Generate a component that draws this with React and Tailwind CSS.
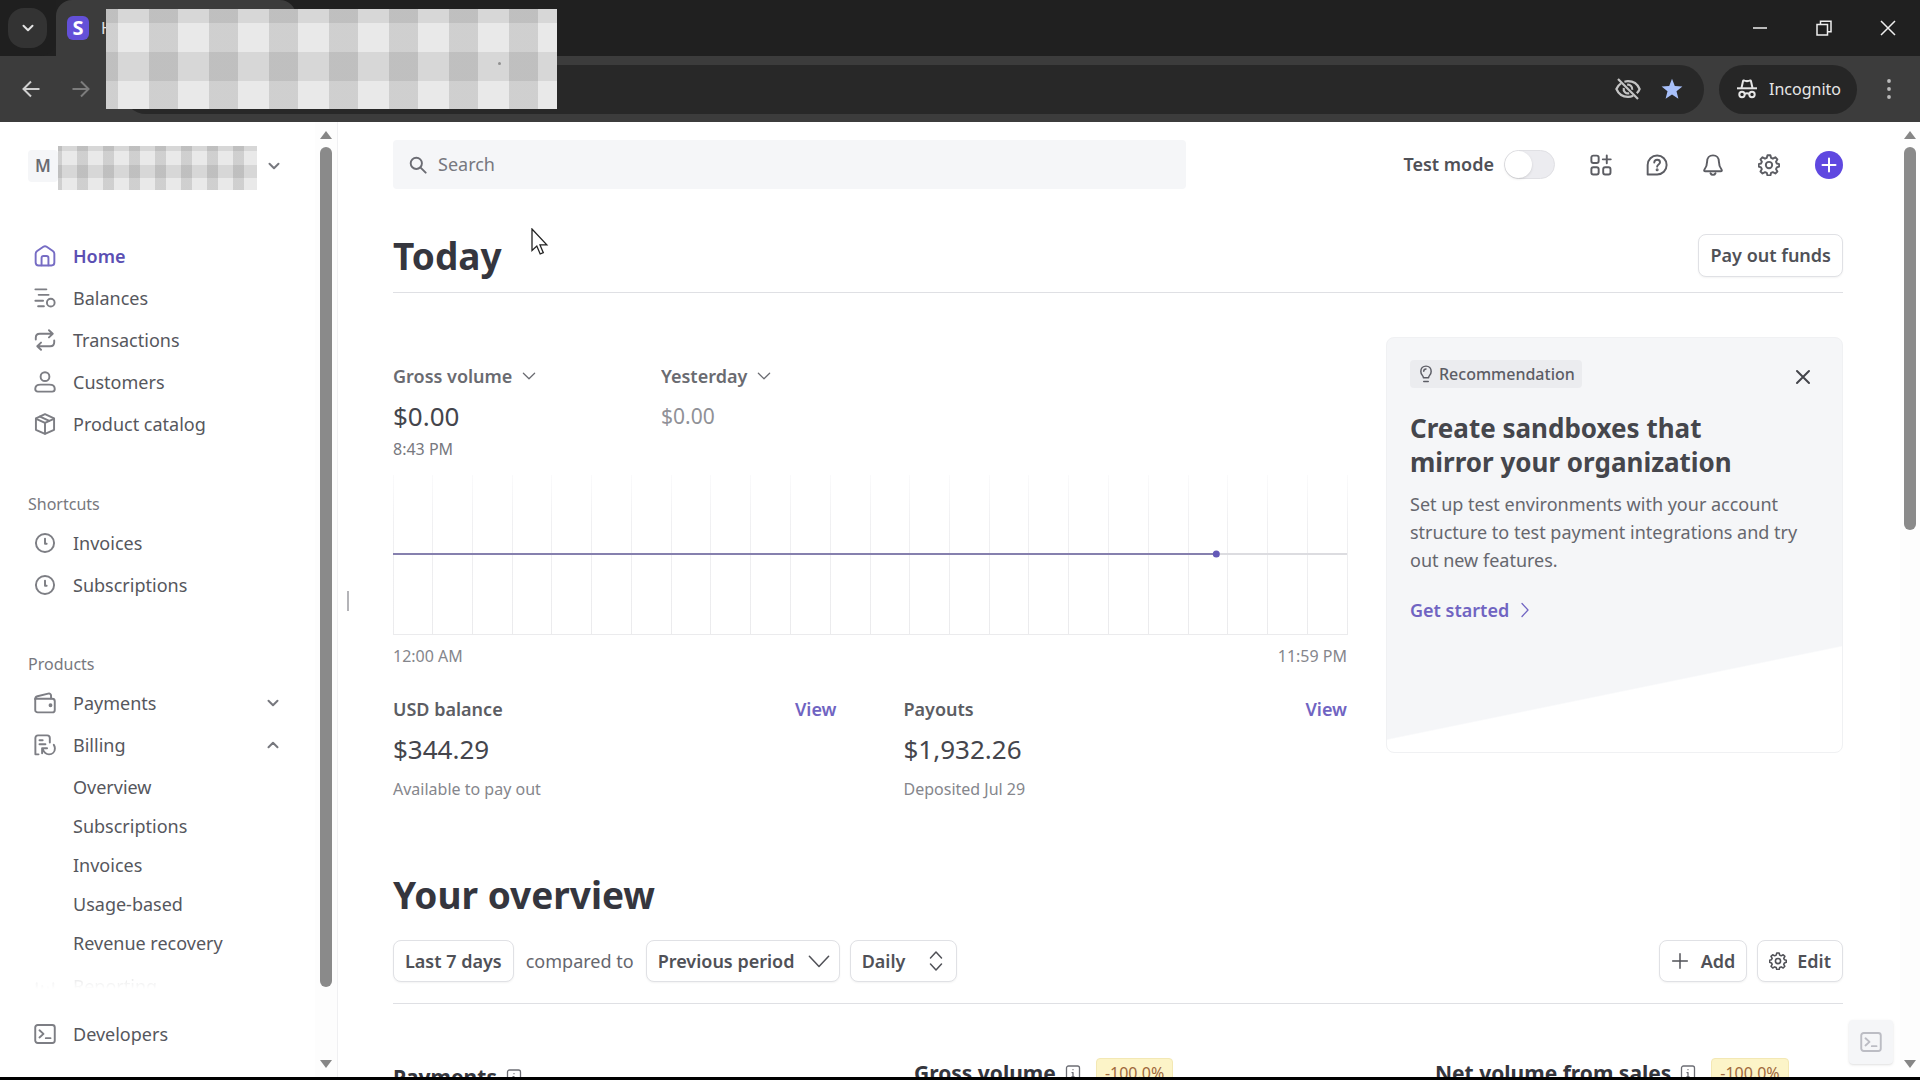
import React from "react";

function Icon({ children, className = "size-[22px]", width = 1.4 }) {
  return (
    <svg
      viewBox="0 0 16 16"
      className={`shrink-0 ${className}`}
      fill="none"
      stroke="currentColor"
      strokeWidth={width}
      strokeLinecap="round"
      strokeLinejoin="round"
      aria-hidden="true"
    >
      {children}
    </svg>
  );
}

const glyphs = {
  home: (
    <>
      <path d="M1.2 6.4c0-.9.4-1.5 1.1-2L6.8 1.3c.8-.5 1.6-.5 2.4 0l4.5 3.1c.7.5 1.1 1.1 1.1 2v6.4c0 1.3-.8 2.1-2.1 2.1H3.3c-1.3 0-2.1-.8-2.1-2.1Z" />
      <path d="M5.5 14.7V9.4c0-.9.5-1.4 1.4-1.4h2.2c.9 0 1.4.5 1.4 1.4v5.3" />
    </>
  ),
  balances: (
    <>
      <path d="M1 1.7h8M3.4 5.7h7.2M1 10h5.6M3 14h4.2" />
      <circle cx="12.2" cy="11.4" r="2.8" />
    </>
  ),
  transactions: (
    <>
      <path d="M1.3 7.6V6.4c0-1.9 1-2.9 2.9-2.9h9.2M10.9.9l2.7 2.6-2.7 2.6" />
      <path d="M14.7 8.4v1.2c0 1.9-1 2.9-2.9 2.9H2.6M5.1 9.9l-2.7 2.6 2.7 2.6" />
    </>
  ),
  customers: (
    <>
      <circle cx="8" cy="4.1" r="3.2" />
      <path d="M.9 13.1c0-2.1 1.7-3.2 3.9-3.2h6.4c2.2 0 3.9 1.1 3.9 3.2 0 1.2-.7 1.9-1.9 1.9H2.8c-1.2 0-1.9-.7-1.9-1.9Z" />
    </>
  ),
  catalog: (
    <>
      <path d="m8 .9 6.6 3v8.3L8 15.2l-6.6-3V3.9Z" />
      <path d="M1.6 4.2 8 7.2l6.4-3M8 7.2v7.8M4.4 2.6l6.7 3.2" />
    </>
  ),
  clock: (
    <>
      <circle cx="8" cy="8" r="6.6" />
      <path d="M8 4.8v3.7h1.2" />
    </>
  ),
  payments: (
    <>
      <path d="M.9 4.9h12.4c1.1 0 1.8.7 1.8 1.8v6.3c0 1.100-.7 1.800-1.800 1.800H2.700c-1.100 0-1.800-.7-1.800-1.800Z" />
      <path d="M.9 5.2c0-1.100.5-1.800 1.600-2.100l7.800-1.900c1.300-.3 2.100.3 2.100 1.500v2" />
      <circle cx="12" cy="9.6" r=".7" fill="currentColor" />
    </>
  ),
  billing: (
    <>
      <path d="M3.300 14.800H1V2.900C1 1.700 1.700 1 2.900 1h6.700c1.200 0 1.900.7 1.900 1.900v3.300M4 4.500h2.300M4 7.500h4.300" />
      <path d="M5.900 10.300V14M5.900 10.300h3.600M6.300 10.900c1 2.500 2.400 3.900 4.600 3.900 2.500 0 4.300-1.800 4.300-4.300 0-1-.3-1.900-.8-2.600" />
    </>
  ),
  reporting: <path d="M2 15V6M6 15V8M10 15V9M14 15V6" />,
  terminal: (
    <>
      <rect x=".9" y="1.5" width="14.2" height="13" rx="1.8" />
      <path d="m4 5.300 2.900 2.600L4 10.500M8.600 11h3.400" />
    </>
  ),
  down: <path d="m3.500 5.800 4.500 4.400 4.500-4.400" />,
  wideDown: <path d="m1 4.500 7 7.500 7-7.500" />,
  up: <path d="m3.500 10.200 4.500-4.400 4.500 4.400" />,
  right: <path d="m5 1.500 6 6.500-6 6.500" />,
  search: (
    <>
      <circle cx="6.5" cy="6.5" r="5" />
      <path d="m10.300 10.300 4.500 4.500" />
    </>
  ),
  apps: (
    <>
      <rect x="1" y="1.2" width="5.3" height="5.3" rx="1.4" />
      <rect x="1" y="9.6" width="5.3" height="5.3" rx="1.4" />
      <rect x="9.6" y="9.6" width="5.3" height="5.3" rx="1.4" />
      <path d="M12.200 1v5.800M9.300 3.900h5.800" />
    </>
  ),
  help: (
    <>
      <path d="M1.200 14.900V8A6.900 6.900 0 1 1 8.100 14.900Z" />
      <path d="M6 6.200c.1-1.300.9-2 2.100-2s2.100.7 2.100 1.800c0 1.600-2.100 1.600-2.100 3.200" />
      <circle cx="8.1" cy="11.5" r=".4" fill="currentColor" />
    </>
  ),
  bell: (
    <>
      <path d="M8 1C5.300 1 3.700 3 3.700 5.600c0 3-.9 4.300-1.900 5.700-.5.700-.2 1.300.6 1.300h11.200c.8 0 1.100-.6.6-1.300-1-1.400-1.900-2.700-1.900-5.700C12.300 3 10.700 1 8 1Z" />
      <path d="M6.200 14c.3.700.9 1.200 1.800 1.200s1.500-.5 1.800-1.200" />
    </>
  ),
  gear: (
    <>
      <path d="m6.900.9-.5 1.900-1.300.6-1.800-1-1.500 1.500 1 1.800-.6 1.200-1.700.5v1.700l1.700.6.6 1.300-1 1.700 1.500 1.500 1.800-1 1.300.6.500 1.800h2.100l.5-1.800 1.300-.6 1.800 1 1.500-1.500-1-1.700.6-1.300 1.700-.6V7.400l-1.700-.5-.6-1.200 1-1.800-1.500-1.500-1.800 1-1.300-.6L9 .9Z" />
      <circle cx="8" cy="8" r="2.3" />
    </>
  ),
  plus: <path d="M8 1.500v13M1.500 8h13" />,
  close: <path d="m2 2 12 12M14 2 2 14" />,
  bulb: (
    <>
      <path d="M5.700 11.300c0-1.700-2.300-2.700-2.300-5.600C3.400 3 5.300 1 8 1s4.600 2 4.600 4.700c0 2.900-2.300 3.900-2.300 5.600ZM6 14.700h4" />
      <path d="M8 3.600c-1.200 0-2 .8-2 2" />
    </>
  ),
  info: (
    <>
      <rect x="1.5" y="1" width="13" height="14" rx="2" />
      <path d="M8 4.600v.1M7 7.600h1v4M7 11.600h2" />
    </>
  ),
  sort: <path d="m4 5.800 4-4.300 4 4.300M4 10.200l4 4.300 4-4.300" />,
};

function TitleBar() {
  return (
    <header className="shrink-0 bg-[#3c3c3c]">
      <div className="flex h-14 items-start bg-[#202020]">
        <div className="flex h-14 w-[56px] items-start rounded-br-2xl bg-[#1f1f1f] pt-2 pl-2">
          <button aria-label="Search tabs" className="flex h-10 w-[39px] items-center justify-center rounded-2xl bg-[#333333] text-[#e3e3e3]">
            <Icon className="size-4" width={2}>{glyphs.down}</Icon>
          </button>
        </div>
        <div className="flex h-14 w-[240px] items-center gap-3 rounded-t-2xl bg-[#3c3c3c] pl-[11px]">
          <span className="flex h-6 w-[22px] items-center justify-center rounded-md bg-[#6350d8] text-[20px] leading-none font-bold text-white">S</span>
          <span className="text-[16px] text-[#e3e3e3]">Home</span>
        </div>
        <div className="ml-auto flex h-14 items-center text-[#eeeeee]">
          <button aria-label="Minimize" className="flex w-16 justify-center">
            <svg viewBox="0 0 16 16" className="size-4" stroke="currentColor" strokeWidth="1.5"><path d="M1 8h14" /></svg>
          </button>
          <button aria-label="Restore" className="flex w-16 justify-center">
            <svg viewBox="0 0 16 16" className="size-4" fill="none" stroke="currentColor" strokeWidth="1.5"><path d="M1 4.500h10.500V15H1ZM4.500 4.500V1.200H15v10.500h-3.500" /></svg>
          </button>
          <button aria-label="Close window" className="flex w-16 justify-center">
            <svg viewBox="0 0 16 16" className="size-4" fill="none" stroke="currentColor" strokeWidth="1.5"><path d="m1 1 14 14M15 1 1 15" /></svg>
          </button>
        </div>
      </div>
      <div className="flex h-[66px] items-center pr-[29px] pl-[22px]">
        <button aria-label="Back" className="mr-8 text-[#d0d0d0]">
          <svg viewBox="0 0 18 18" className="size-[18px]" fill="none" stroke="currentColor" strokeWidth="2"><path d="M17.500 9H2M9 1.500 1.500 9 9 16.500" /></svg>
        </button>
        <button aria-label="Forward" className="mr-8 text-[#7c7c7c]">
          <svg viewBox="0 0 18 18" className="size-[18px]" fill="none" stroke="currentColor" strokeWidth="2"><path d="M.5 9H16M9 1.500 16.500 9 9 16.500" /></svg>
        </button>
        <div className="flex h-[49px] flex-1 items-center justify-end gap-5 rounded-full bg-[#282828] pr-[21px]">
          <svg viewBox="0 0 26 22" className="h-[22px] w-[26px]" fill="none" stroke="#c4c4c4" strokeWidth="2.2">
            <path d="M6 5.400C4 6.700 2.400 8.700 1.400 11 3.400 15.700 7.800 18.800 13 18.800c1.900 0 3.600-.4 5.200-1.100M9.400 3.700c1.100-.3 2.300-.5 3.600-.5 5.200 0 9.600 3.100 11.600 7.800-.6 1.600-1.600 3-2.800 4.200" />
            <path d="M12.200 6.800a4.300 4.300 0 0 1 5 5M8.800 10a4.300 4.300 0 0 0 5.400 5.200M3 1l20 20" />
          </svg>
          <svg viewBox="0 0 22 22" className="size-[22px]" fill="#a8c0fa"><path d="m11 .8 2.800 7.100 7.600.5-5.900 4.900 1.900 7.500-6.400-4.200-6.400 4.200 1.900-7.500L.6 8.400l7.600-.5Z" /></svg>
        </div>
        <button className="mr-[30px] ml-[15px] flex h-[49px] items-center gap-3 rounded-full bg-[#262626] pr-4 pl-[18px] text-[16px] text-[#e6e6e6]">
          <svg viewBox="0 0 20 20" className="size-5" fill="none" stroke="currentColor" strokeWidth="2">
            <path d="M0 9.300h20" /><path d="M4.500 9 6 2.200c.2-.7.700-1 1.400-.7L10 2.300l2.600-.8c.7-.3 1.200 0 1.400.7L15.500 9" />
            <circle cx="5" cy="15.5" r="2.7" /><circle cx="15" cy="15.5" r="2.7" /><path d="M7.700 15c1.400-.9 3.200-.9 4.600 0" />
          </svg>
          Incognito
        </button>
        <button aria-label="Browser menu" className="text-[#bbbbbb]">
          <svg viewBox="0 0 4 22" className="h-[22px] w-1" fill="currentColor"><circle cx="2" cy="3" r="1.9" /><circle cx="2" cy="11" r="1.9" /><circle cx="2" cy="19" r="1.9" /></svg>
        </button>
      </div>
    </header>
  );
}

function ScrollRail({ thumb, className = "" }) {
  return (
    <div className={`flex shrink-0 flex-col items-center bg-[#fdfdfd] pt-[9px] pb-[9px] ${className}`} aria-hidden="true">
      <svg viewBox="0 0 12 8" className="h-2 w-3" fill="#868686"><path d="M6 0l6 8H0Z" /></svg>
      <div className="flex w-3 flex-1 flex-col pt-2">
        <div className={`w-3 rounded-full bg-[#8a8a8a] ${thumb}`} />
      </div>
      <svg viewBox="0 0 12 8" className="h-2 w-3" fill="#868686"><path d="M6 8l6-8H0Z" /></svg>
    </div>
  );
}

function NavItem({ icon, label, active, chevron }) {
  return (
    <a href="#" className={`flex h-[42px] items-center pl-[34px] ${active ? "font-semibold text-[#5b4fb3]" : "text-[#56575d]"}`}>
      <span className={`flex w-[39px] ${active ? "text-[#766cc4]" : "text-[#7d7e84]"}`}><Icon>{glyphs[icon]}</Icon></span>
      <span className="flex-1">{label}</span>
      {chevron && <span className="pr-[34px] text-[#77787e]"><Icon className="size-4" width={2}>{glyphs[chevron]}</Icon></span>}
    </a>
  );
}

function Sidebar() {
  return (
    <aside className="flex w-[338px] shrink-0 border-r border-[#f0f0f2]">
      <div className="flex min-w-0 flex-1 flex-col text-[18px]">
        <button className="mt-[19px] flex h-[49px] w-full shrink-0 items-center pl-7 text-left" aria-label="Switch account">
          <span className="flex h-8 w-[30px] items-center justify-center rounded bg-[#f5f6f8] text-[17px] font-semibold text-[#6a6b71]">M</span>
          <span className="h-11 w-[199px] self-end bg-[#e9e9e9] bg-[linear-gradient(180deg,#00000014_5px,transparent_5px_19px,#00000014_19px_32px,transparent_32px),repeating-linear-gradient(90deg,#0000001c_0px_4px,transparent_4px_19px,#0000001c_19px_26px)]" />
          <span className="ml-[9px] text-[#77787e]"><Icon className="size-4" width={2}>{glyphs.down}</Icon></span>
        </button>
        <nav className="mt-[45px] flex min-h-0 flex-1 flex-col overflow-hidden">
          <NavItem icon="home" label="Home" active />
          <NavItem icon="balances" label="Balances" />
          <NavItem icon="transactions" label="Transactions" />
          <NavItem icon="customers" label="Customers" />
          <NavItem icon="catalog" label="Product catalog" />
          <h2 className="mt-[49px] mb-2 pl-7 text-[16px] leading-5 text-[#77787e]">Shortcuts</h2>
          <NavItem icon="clock" label="Invoices" />
          <NavItem icon="clock" label="Subscriptions" />
          <h2 className="mt-12 mb-2 pl-7 text-[16px] leading-5 text-[#77787e]">Products</h2>
          <NavItem icon="payments" label="Payments" chevron="down" />
          <NavItem icon="billing" label="Billing" chevron="up" />
          <div className="flex flex-col pt-0.5 text-[#56575d]">
            {["Overview", "Subscriptions", "Invoices", "Usage-based", "Revenue recovery"].map((t) => (
              <a key={t} href="#" className="flex h-[39px] items-center pl-[73px]">{t}</a>
            ))}
          </div>
          <div className="mt-0.5 shrink-0 opacity-15 [mask-image:linear-gradient(180deg,#000000_12px,transparent_24px)]">
            <NavItem icon="reporting" label="Reporting" />
          </div>
        </nav>
        <div className="shrink-0 pb-[22px]"><NavItem icon="terminal" label="Developers" /></div>
      </div>
      <ScrollRail className="w-[22px]" thumb="h-[92%]" />
    </aside>
  );
}

function PlainSelect({ label, option }) {
  return (
    <label className="relative inline-flex items-center text-[#6a6b71]">
      <span className="sr-only">{label}</span>
      <select className="h-7 appearance-none pr-[26px] text-[18px] leading-7 font-semibold outline-none"><option>{option}</option></select>
      <Icon className="pointer-events-none absolute right-0 size-5" width={1}>{glyphs.down}</Icon>
    </label>
  );
}

const boxed = "rounded-lg border border-[#e0e1e5] bg-white shadow-xs font-semibold text-[#505157] text-[18px]";

function BoxedSelect({ label, option, icon, className }) {
  return (
    <label className="relative inline-flex items-center text-[#505157]">
      <span className="sr-only">{label}</span>
      <select className={`h-[42px] appearance-none pl-[11px] outline-none ${boxed} ${className}`}><option>{option}</option></select>
      <Icon className="pointer-events-none absolute right-[10px] size-[22px]" width={1.1}>{glyphs[icon]}</Icon>
    </label>
  );
}

function VolumeChart() {
  const hours = Array.from({ length: 25 }, (_, i) => i);
  return (
    <svg className="mt-4 block h-40 w-full overflow-visible" role="img" aria-label="Gross volume by hour">
      <defs>
        <linearGradient id="grid" x1="0" y1="0" x2="0" y2="160" gradientUnits="userSpaceOnUse">
          <stop offset="0" stopColor="#fafafb" /><stop offset=".3" stopColor="#f0f0f2" /><stop offset="1" stopColor="#ebebed" />
        </linearGradient>
      </defs>
      {hours.map((h) => (
        <line key={h} x1={`${(h / 24) * 100}%`} x2={`${(h / 24) * 100}%`} y1="0" y2="160" stroke="url(#grid)" strokeWidth="1" shapeRendering="crispEdges" />
      ))}
      <line x1="0" x2="100%" y1="159.5" y2="159.5" stroke="#ebebed" />
      <line x1="86.3%" x2="100%" y1="79" y2="79" stroke="#dcdce0" strokeWidth="2" />
      <line x1="0" x2="86.3%" y1="79" y2="79" stroke="#8680ae" strokeWidth="2" />
      <circle cx="86.3%" cy="79" r="3.5" fill="#6459b8" />
    </svg>
  );
}

function Balance({ title, amount, note }) {
  return (
    <section>
      <div className="flex items-center justify-between text-[18px] leading-6 font-semibold">
        <h3 className="text-[#5c5d63]">{title}</h3>
        <a href="#" className="text-[#7064c2]">View</a>
      </div>
      <p className="mt-3 text-[26px] leading-8 text-[#44454c]">{amount}</p>
      <p className="mt-[14px] text-[16px] leading-5 text-[#85868c]">{note}</p>
    </section>
  );
}

function Recommendation() {
  return (
    <aside className="flex h-[416px] w-[457px] shrink-0 flex-col items-start rounded-lg border border-[#f0f1f3] bg-[linear-gradient(168.4deg,#f5f6f8_79%,#ffffff_79.3%)] px-[23px] pt-[22px]">
      <div className="flex w-full items-end justify-between pr-2">
        <span className="flex h-7 items-center gap-1 rounded bg-[#ebecef] px-[7px] text-[16px] font-medium text-[#5c5d65]">
          <Icon className="size-[18px]" width={1.3}>{glyphs.bulb}</Icon>Recommendation
        </span>
        <button aria-label="Dismiss" className="pb-[3px] text-[#44454b]"><Icon className="size-4" width={2}>{glyphs.close}</Icon></button>
      </div>
      <h2 className="mt-[23px] max-w-[370px] text-[26px] leading-[34px] font-bold text-[#45464c]">Create sandboxes that mirror your organization</h2>
      <p className="mt-[11px] text-[18px] leading-7 text-[#66676e]">Set up test environments with your account structure to test payment integrations and try out new features.</p>
      <a href="#" className="mt-6 flex items-center gap-2 text-[18px] leading-6 font-semibold text-[#7064c2]">
        Get started<Icon className="size-4" width={1.3}>{glyphs.right}</Icon>
      </a>
    </aside>
  );
}

function Metric({ title, change }) {
  return (
    <section className="flex items-center gap-[9px]">
      <h3 className="text-[21px] leading-7 font-bold whitespace-nowrap text-[#35363d]">{title}</h3>
      <span className="text-[#6c6d74]"><Icon className="size-4" width={1.3}>{glyphs.info}</Icon></span>
      {change && <span className="ml-[6px] rounded border border-[#f3e8b4] bg-[#fcf4c8] px-2 text-[16px] leading-7 text-[#a0693c]">{change}</span>}
    </section>
  );
}

function Dashboard() {
  return (
    <main className="min-w-0 flex-1 overflow-hidden pt-[18px] pr-[57px] pl-[55px]">
      <div className="flex items-center justify-between">
        <label className="flex h-[49px] w-[793px] items-center gap-[11px] rounded bg-[#f5f6f8] px-4 text-[#6b6c73]">
          <Icon className="size-[18px]" width={1.7}>{glyphs.search}</Icon>
          <input type="search" aria-label="Search" placeholder="Search" className="w-full bg-transparent text-[18px] outline-none placeholder:text-[#77787f]" />
        </label>
        <div className="flex items-center text-[#5c5d63]">
          <label className="mr-[35px] flex items-center gap-[10px] text-[18px] font-semibold text-[#505157]">
            Test mode
            <input type="checkbox" role="switch" className="h-[29px] w-[51px] appearance-none rounded-full border border-[#e0e0e4] bg-[#ececf0] before:block before:size-[27px] before:rounded-full before:bg-white before:shadow-sm" />
          </label>
          <div className="mr-[35px] flex gap-[34px]">
            <button aria-label="Apps"><Icon>{glyphs.apps}</Icon></button>
            <button aria-label="Help"><Icon>{glyphs.help}</Icon></button>
            <button aria-label="Notifications"><Icon>{glyphs.bell}</Icon></button>
            <button aria-label="Settings"><Icon>{glyphs.gear}</Icon></button>
          </div>
          <button aria-label="Create" className="flex size-7 items-center justify-center rounded-full bg-[#5f48e0] text-white">
            <Icon className="size-4" width={2}>{glyphs.plus}</Icon>
          </button>
        </div>
      </div>

      <div className="mt-[45px] flex items-center justify-between border-b border-[#dfe0e4] pb-[15px]">
        <h1 className="text-[37px] leading-[43px] font-bold text-[#35363e]">Today</h1>
        <button className={`h-[43px] px-[11px] ${boxed}`}>Pay out funds</button>
      </div>

      <div className="mt-11 flex gap-[39px]">
        <div className="min-w-0 flex-1 pt-[25px]">
          <div className="flex">
            <div className="w-[268px]">
              <PlainSelect label="Metric" option="Gross volume" />
              <p className="mt-2 text-[26px] leading-9 text-[#44454c]">$0.00</p>
              <p className="mt-[5px] text-[16px] leading-5 text-[#77787e]">8:43 PM</p>
            </div>
            <div>
              <PlainSelect label="Comparison day" option="Yesterday" />
              <p className="mt-2 text-[21px] leading-9 text-[#909197]">$0.00</p>
            </div>
          </div>
          <VolumeChart />
          <div className="mt-[11px] flex justify-between text-[16px] leading-5 text-[#85868c]"><span>12:00 AM</span><span>11:59 PM</span></div>
          <div className="mt-[31px] grid grid-cols-2 gap-[67px]">
            <Balance title="USD balance" amount="$344.29" note="Available to pay out" />
            <Balance title="Payouts" amount="$1,932.26" note="Deposited Jul 29" />
          </div>
        </div>
        <Recommendation />
      </div>

      <h2 className="mt-[72px] text-[37px] leading-[48px] font-bold text-[#35363e]">Your overview</h2>
      <div className="mt-[21px] flex items-center border-b border-[#dfe0e4] pb-[21px]">
        <button className={`h-[42px] px-[11px] ${boxed}`}>Last 7 days</button>
        <span className="mx-3 text-[18px] text-[#66676e]">compared to</span>
        <BoxedSelect label="Comparison period" option="Previous period" icon="wideDown" className="w-[194px]" />
        <span className="w-[10px]" />
        <BoxedSelect label="Interval" option="Daily" icon="sort" className="w-[107px]" />
        <div className="ml-auto flex gap-[10px]">
          <button className={`flex h-[42px] items-center gap-3 px-[11px] ${boxed}`}><Icon className="size-[18px]" width={1.3}>{glyphs.plus}</Icon>Add</button>
          <button className={`flex h-[42px] items-center gap-[10px] px-[11px] ${boxed}`}><Icon className="size-[18px]">{glyphs.gear}</Icon>Edit</button>
        </div>
      </div>
      <div className="mt-[51px] grid grid-cols-3 gap-[113px]">
        <div className="pt-2"><Metric title="Payments" /></div>
        <Metric title="Gross volume" change="-100.0%" />
        <Metric title="Net volume from sales" change="-100.0%" />
      </div>
    </main>
  );
}

export default function App() {
  return (
    <div className="relative flex h-screen flex-col overflow-hidden border-b-[3px] border-black bg-white font-['Noto_Sans','Open_Sans',sans-serif] text-[#56575d]">
      <TitleBar />
      <div className="flex min-h-0 flex-1">
        <Sidebar />
        <Dashboard />
        <ScrollRail className="w-5" thumb="h-[42%]" />
      </div>

      <div className="absolute top-[9px] left-[106px] h-[100px] w-[451px] bg-[#e9e9e9] bg-[linear-gradient(180deg,#00000014_14px,transparent_14px_43px,#00000014_43px_72px,transparent_72px),repeating-linear-gradient(90deg,#0000001c_0px_12px,transparent_12px_43px,#0000001c_43px_60px)]" />
      <div className="absolute top-[62px] left-[498px] size-[3px] rounded-full bg-[#909090]" />
      <div className="absolute top-[591px] left-[347px] h-5 w-[2px] bg-[#b4b4b8]" />
      <button aria-label="Open developer console" className="absolute right-[27px] bottom-[13px] flex size-11 items-center justify-center rounded bg-[#f5f6f8] text-[#bcbdc4] shadow-sm">
        <Icon className="size-[22px]">{glyphs.terminal}</Icon>
      </button>
      <svg viewBox="0 0 18 28" className="pointer-events-none absolute top-[228px] left-[531px] h-7 w-[18px]" fill="#ffffff" stroke="#222222" strokeWidth="1.3" aria-hidden="true">
        <path d="M1 1v21.500l4.800-4.500 3.400 8 3.100-1.300-3.300-7.800h6.800Z" />
      </svg>
    </div>
  );
}
